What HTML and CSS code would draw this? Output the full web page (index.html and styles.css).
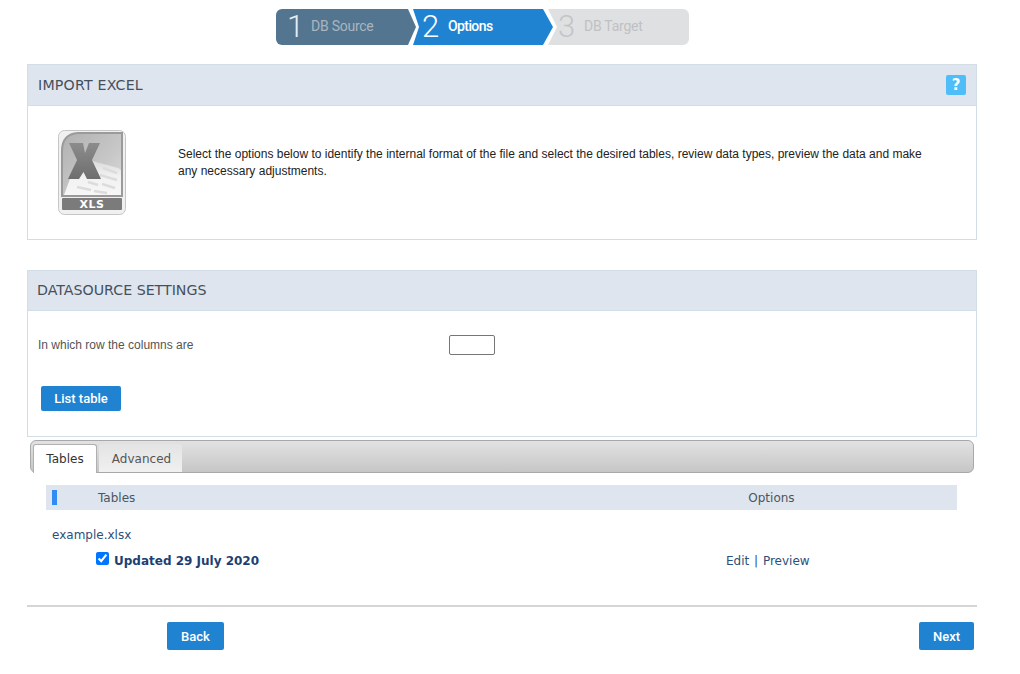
FILE: index.html
```html
<!DOCTYPE html>
<html lang="en">
<head>
<meta charset="utf-8">
<title>Import Excel</title>
<link rel="stylesheet" href="styles.css">
</head>
<body>
<div class="page">
  <nav class="steps">
    <svg class="steps-bg" width="415" height="36" viewBox="0 0 415 36" aria-hidden="true">
      <path d="M272 0H407a6 6 0 0 1 6 6V30a6 6 0 0 1-6 6H272L281 18Z" fill="#dfe0e2"/>
      <path d="M137 0H267L277 18 267 36H137L143 18Z" fill="#2083d2"/>
      <path d="M6 0H132L140 18 132 36H6a6 6 0 0 1-6-6V6a6 6 0 0 1 6-6Z" fill="#54758f"/>
    </svg>
    <div class="step step-one"><span class="num">1</span><span class="lbl">DB Source</span></div>
    <div class="step step-two"><span class="num">2</span><span class="lbl">Options</span></div>
    <div class="step step-three"><span class="num">3</span><span class="lbl">DB Target</span></div>
  </nav>

  <section class="panel panel-import">
    <header class="panel-head head-import">
      <h2>IMPORT EXCEL</h2>
      <span class="help">?</span>
    </header>
    <div class="import-body">
      <svg class="xls" width="68" height="85" viewBox="0 0 68 85" aria-hidden="true">
        <defs>
          <linearGradient id="sheet" x1="0" y1="0" x2="1" y2="1">
            <stop offset="0" stop-color="#b0b0b0"/>
            <stop offset="0.6" stop-color="#c8c8c8"/>
            <stop offset="1" stop-color="#dedede"/>
          </linearGradient>
          <linearGradient id="paper" x1="0" y1="0" x2="0" y2="1">
            <stop offset="0" stop-color="#d6d6d6"/>
            <stop offset="0.5" stop-color="#f1f1f1"/>
            <stop offset="1" stop-color="#f7f7f7"/>
          </linearGradient>
          <linearGradient id="cross" x1="0" y1="0" x2="0" y2="1">
            <stop offset="0" stop-color="#8c8c8c"/>
            <stop offset="1" stop-color="#6e6e6e"/>
          </linearGradient>
        </defs>
        <rect x="0.500" y="0.500" width="67" height="84" rx="6" fill="#f0f0f0" stroke="#c6c6c6"/>
        <path d="M4 66V21Q4 4 20 3H64V66Z" fill="url(#sheet)" stroke="#9a9a9a" stroke-width="2"/>
        <path d="M6 65L20 27 60 38 63 40V65Z" fill="url(#paper)"/>
        <path d="M45 38L59 43M42 45L59 50M30 52L40 55M44 54L57 58M19 57L33 60M36 61L49 63" stroke="#dcdcdc" stroke-width="2.500" fill="none"/>
        <path d="M11 13H25L27 23 31 13H42L34 30 43 49H29L25.500 42 21 49H10L19 30Z" fill="url(#cross)"/>
        <rect x="4" y="68" width="60" height="12" rx="1" fill="#7b7b7b"/>
        <text x="34" y="78" class="xls-text" text-anchor="middle">XLS</text>
      </svg>
      <p class="intro">Select the options below to identify the internal format of the file and select the desired tables, review data types, preview the data and make any necessary adjustments.</p>
    </div>
  </section>

  <section class="panel panel-source">
    <header class="panel-head head-source"><h2>DATASOURCE SETTINGS</h2></header>
    <div class="source-body">
      <div class="field">
        <label class="field-label" for="row">In which row the columns are</label>
        <input class="field-input" id="row" type="text">
      </div>
      <button class="btn btn-list" type="button">List table</button>
    </div>
  </section>

  <div class="tabbar">
    <span class="tab tab-active">Tables</span>
    <span class="tab">Advanced</span>
  </div>

  <div class="tables">
    <div class="thead">
      <span class="marker"></span>
      <span class="th-name">Tables</span>
      <span class="th-opts">Options</span>
    </div>
    <div class="file">example.xlsx</div>
    <div class="row">
      <input class="check" type="checkbox" checked>
      <strong class="row-name">Updated 29 July 2020</strong>
      <span class="row-opts"><a>Edit</a> | <a>Preview</a></span>
    </div>
  </div>

  <footer class="footer">
    <button class="btn btn-back" type="button">Back</button>
    <button class="btn btn-next" type="button">Next</button>
  </footer>
</div>
</body>
</html>
```
FILE: styles.css
```css
* { box-sizing: border-box; }
html, body { margin: 0; padding: 0; background: #fff; }
body { font-family: "DejaVu Sans", Verdana, sans-serif; color: #333; }
.page { width: 1020px; height: 674px; padding: 9px 43px 0 27px; overflow: hidden; }

.steps { position: relative; display: flex; width: 415px; height: 36px; margin-left: 249px; font-family: Roboto, "Liberation Sans", sans-serif; }
.steps-bg { position: absolute; left: 0; top: 0; }
.step { position: relative; display: flex; align-items: center; height: 36px; }
.step-one { width: 136px; padding-left: 11px; color: #a9b5bf; }
.step-two { width: 136px; padding-left: 10px; color: #fff; }
.step-three { padding-left: 10px; color: #bfc0c2; }
.num { font-size: 31px; font-weight: 300; width: 24px; line-height: 36px; }
.step-two .num { width: 26px; }
.step-three .num { width: 26px; }
.step-one .num { color: #e8edf1; }
.step-two .num { color: #fff; }
.step-three .num { color: #c4c5c7; }
.lbl { font-size: 14px; margin-top: -2px; letter-spacing: -0.250px; }
.step-two .lbl { font-weight: 500; letter-spacing: -0.600px; }

.panel { width: 950px; border: 1px solid #d3dde6; border-top: 0; }
.panel-import { height: 176px; margin-top: 19px; }
.panel-source { height: 167px; margin-top: 30px; }
.panel-head { display: flex; align-items: center; justify-content: space-between; background: #dfe5ee; border: 1px solid #d3dde6; border-width: 1px 0; }
.panel-head h2 { margin: 0; font-size: 14.200px; font-weight: 400; color: #46505c; }
.head-import { height: 42px; padding: 0 10px; }
.head-import h2 { letter-spacing: 0.200px; }
.head-source { height: 41px; padding: 0 9px 2px; }
.help { display: flex; align-items: center; justify-content: center; width: 20px; height: 20px; border-radius: 2px; background: #4ebdf8; color: #fff; font-size: 15px; font-weight: 700; }

.import-body { display: flex; align-items: flex-start; padding: 24px 50px 0 30px; }
.xls { flex: none; }
.xls-text { font-family: "DejaVu Sans", sans-serif; font-size: 11px; font-weight: 700; letter-spacing: 0.500px; fill: #fff; }
.intro { margin: 16px 0 0 52px; font-family: "Liberation Sans", Arial, sans-serif; font-size: 12px; line-height: 17px; color: #222; }

.source-body { padding: 0 10px; }
.field { display: flex; align-items: center; height: 20px; margin-top: 24px; }
.field-label { width: 411px; font-family: "Liberation Sans", Arial, sans-serif; font-size: 12px; color: #555; }
.field-input { width: 46px; height: 20px; padding: 0; background: #fff; border: 1px solid #767676; border-radius: 2px; }

.btn { display: block; border: 0; border-radius: 2px; background: #2083d2; color: #fff; font-family: Roboto, "Liberation Sans", sans-serif; font-size: 13px; font-weight: 500; padding: 0; }
.btn-list { width: 80px; height: 25px; margin: 31px 0 0 3px; }

.tabbar { display: flex; align-items: flex-end; gap: 2px; width: 944px; height: 33px; margin: 3px 0 0 3px; padding-left: 2px; border: 1px solid #a8a8a8; border-radius: 6px; background: linear-gradient(#e2e2e2, #c6c6c6); }
.tab { display: flex; align-items: center; justify-content: center; width: 83px; height: 28px; padding: 2px 0 0 2px; border-radius: 3px 3px 0 0; font-size: 12px; color: #555; background: linear-gradient(#e4e4e4, #f0f0f0); }
.tab-active { width: 64px; height: 29px; padding: 0; background: #fff; color: #333; border: 1px solid #b0b0b0; border-bottom: 0; margin-bottom: -1px; }

.tables { margin: 12px 0 0 19px; width: 911px; }
.thead { position: relative; display: flex; align-items: center; height: 25px; background: #dfe5ee; font-size: 12px; color: #4a5562; }
.marker { width: 5px; height: 15px; margin-left: 6px; background: #2f8cf4; }
.th-name { margin-left: 41px; }
.th-opts { margin-left: 613px; }
.file { margin: 17px 0 0 6px; height: 16px; font-size: 12px; line-height: 16px; color: #2c4f7c; }
.row { display: flex; align-items: center; height: 18px; margin-top: 9px; color: #2c4f7c; font-size: 12px; }
.check { width: 13px; height: 13px; margin: -6px 0 0 50px; accent-color: #0075ff; }
.row-name { width: 612px; margin-left: 5px; font-weight: 700; color: #1d3f72; font-size: 12px; }
.row-opts { color: #2c4f7c; word-spacing: 1px; }

.footer { display: flex; justify-content: space-between; width: 950px; height: 18px; margin-top: 35px; padding: 15px 3px 0 140px; border-top: 2px solid #d5d5d5; }
.btn-back { width: 57px; height: 28px; flex: none; }
.btn-next { width: 55px; height: 28px; flex: none; }
```
